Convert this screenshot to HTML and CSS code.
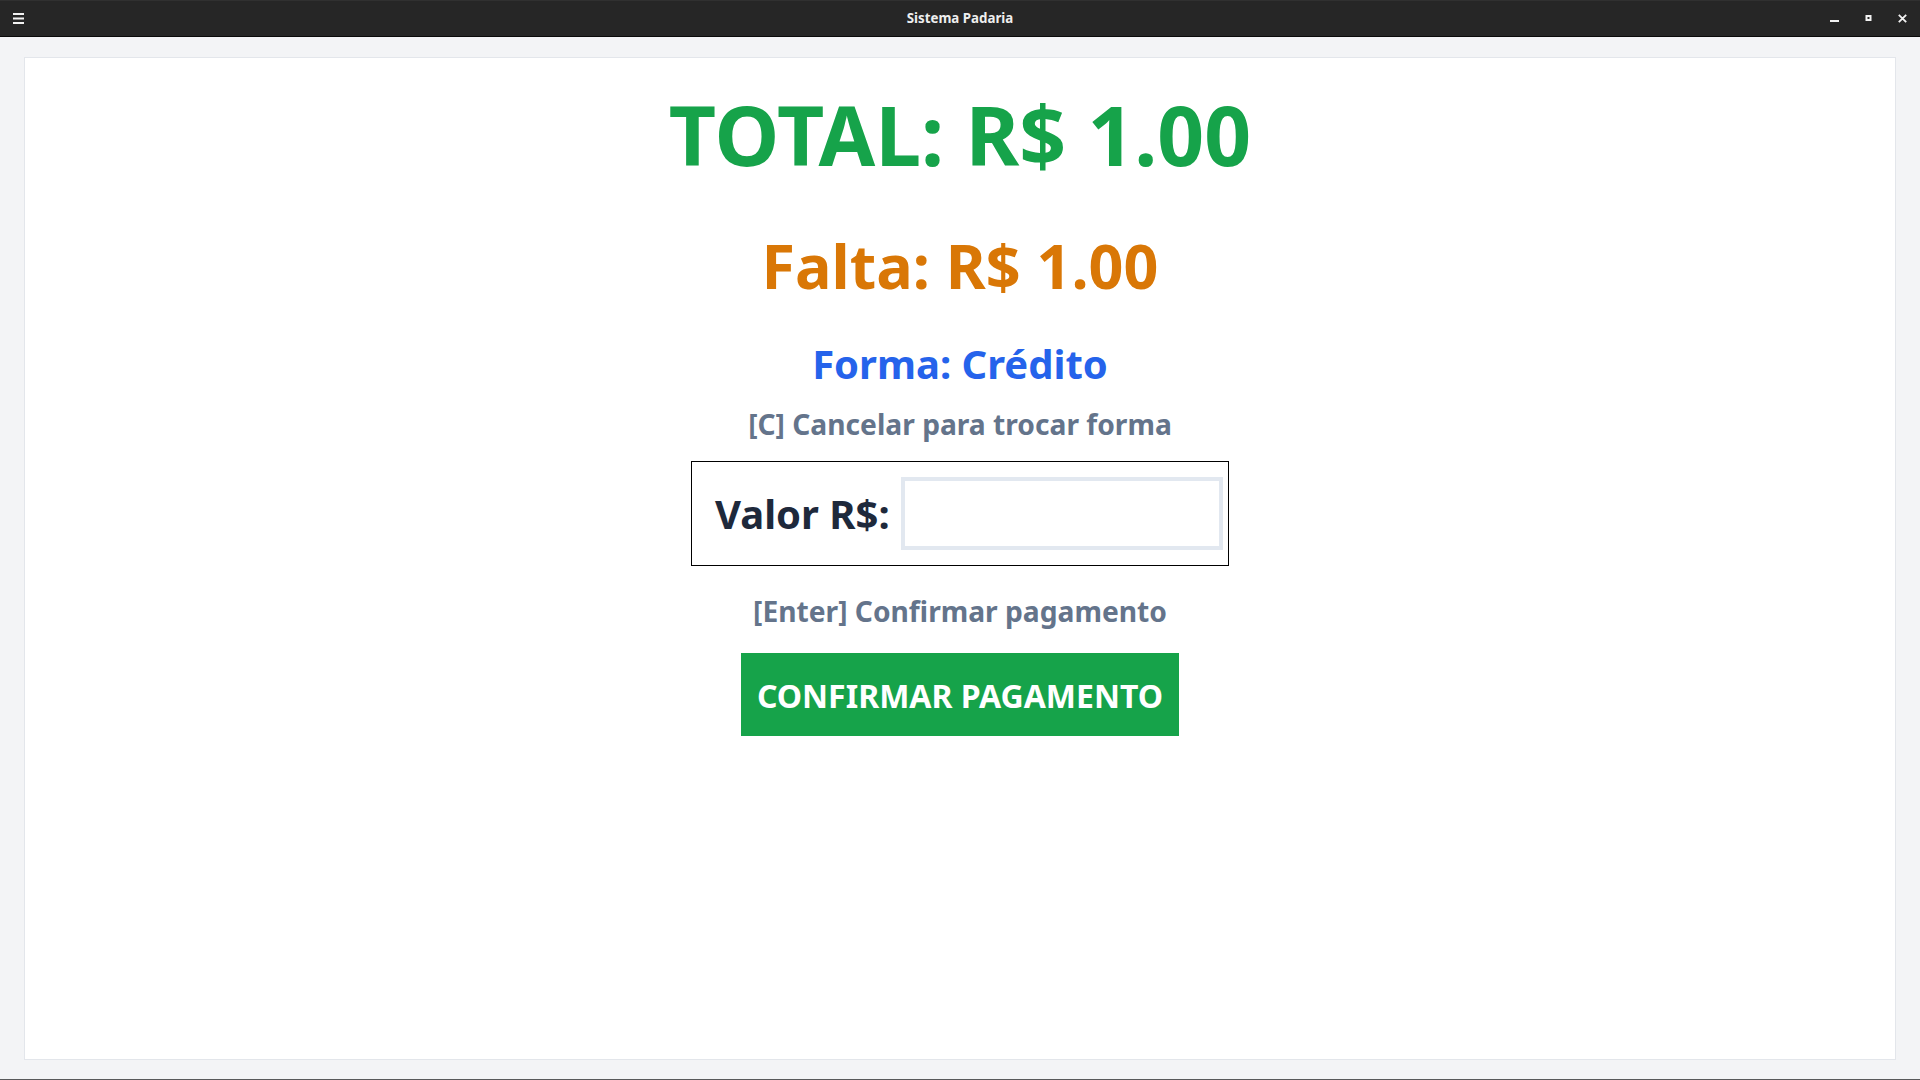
FILE: index.html
```html
<!DOCTYPE html>
<html lang="pt-BR">
<head>
<meta charset="utf-8">
<title>Sistema Padaria</title>
<link rel="stylesheet" href="styles.css">
</head>
<body>
<div class="window">
  <header class="titlebar">
    <div class="tb-left">
      <svg class="menu-icon" width="11" height="11" viewBox="0 0 11 11"><rect x="0" y="0" width="11" height="2" fill="#f2f2f2"/><rect x="0" y="4.5" width="11" height="2" fill="#f2f2f2"/><rect x="0" y="9" width="11" height="2" fill="#f2f2f2"/></svg>
    </div>
    <div class="tb-title">Sistema Padaria</div>
    <div class="tb-right">
      <svg class="wbtn" width="9" height="9" viewBox="0 0 9 9"><rect x="0" y="6" width="9" height="2" fill="#f2f2f2"/></svg>
      <svg class="wbtn" width="9" height="9" viewBox="0 0 9 9"><rect x="1.5" y="1" width="6" height="6" fill="#f2f2f2"/><rect x="3.5" y="3" width="2" height="2" fill="#262626"/></svg>
      <svg class="wbtn" width="9" height="9" viewBox="0 0 9 9"><path d="M0.8 0.8 L8.2 8.2 M8.2 0.8 L0.8 8.2" stroke="#f2f2f2" stroke-width="1.8" fill="none"/></svg>
    </div>
  </header>
  <main class="content">
    <section class="card">
      <div class="total">TOTAL: R$ 1.00</div>
      <div class="falta">Falta: R$ 1.00</div>
      <div class="forma">Forma: Crédito</div>
      <div class="hint hint-c">[C] Cancelar para trocar forma</div>
      <div class="valor-box">
        <label class="valor-label" for="valor">Valor R$:</label>
        <input class="valor-input" id="valor" type="text">
      </div>
      <div class="hint hint-enter">[Enter] Confirmar pagamento</div>
      <button class="confirm-btn">CONFIRMAR PAGAMENTO</button>
    </section>
  </main>
</div>
</body>
</html>
```

FILE: styles.css
```css
* { box-sizing: border-box; }
html, body { margin: 0; padding: 0; }
body {
  width: 1920px;
  height: 1080px;
  overflow: hidden;
  font-family: "Noto Sans", "Open Sans", sans-serif;
  background: #f3f4f6;
}
.window {
  height: 1080px;
  display: flex;
  flex-direction: column;
  border-bottom: 1px solid #58595b;
}
.titlebar {
  height: 37px;
  flex: 0 0 37px;
  background: #262626;
  border-top: 1px solid #303030;
  border-bottom: 1px solid #0a0a0a;
  display: flex;
  align-items: center;
  position: relative;
}
.tb-left {
  padding-left: 13px;
  display: flex;
  align-items: center;
  height: 100%;
}
.menu-icon { display: block; margin-top: -1px; }
.tb-title {
  position: absolute;
  left: 0;
  right: 0;
  top: 0;
  bottom: 0;
  display: flex;
  align-items: center;
  justify-content: center;
  color: #eeeeee;
  font-weight: 700;
  font-size: 13.3px;
  padding-bottom: 2px;
  pointer-events: none;
}
.tb-right {
  margin-left: auto;
  display: flex;
  align-items: center;
  gap: 25px;
  padding-right: 13px;
  height: 100%;
}
.wbtn { display: block; margin-top: -1px; }
.content {
  flex: 1;
  padding: 20px 24px 19px;
  display: flex;
}
.card {
  flex: 1;
  background: #ffffff;
  border: 1px solid #e3e6eb;
  display: flex;
  flex-direction: column;
  align-items: center;
  padding-top: 35px;
}
.total, .falta, .forma, .hint { line-height: 1; font-weight: 700; }
.total {
  font-size: 82px;
  color: #16a34a;
}
.falta {
  font-size: 61px;
  color: #d97706;
  margin-top: 60px;
}
.forma {
  font-size: 40px;
  color: #2563eb;
  margin-top: 48px;
}
.hint {
  font-size: 28.2px;
  color: #64748b;
}
.hint-c { margin-top: 26px; }
.valor-box {
  margin-top: 23px;
  width: 538px;
  height: 105px;
  border: 1px solid #000000;
  display: flex;
  align-items: center;
  padding: 0 5px 0 23px;
}
.valor-label {
  font-size: 40px;
  font-weight: 700;
  line-height: 1;
  color: #1e293b;
}
.valor-input {
  margin-left: auto;
  width: 322px;
  height: 73px;
  border: 4px solid #e2e8f0;
  background: #ffffff;
  outline: none;
  font-family: inherit;
  font-size: 30px;
  padding: 0 10px;
}
.hint-enter { margin-top: 31px; }
.confirm-btn {
  margin-top: 28px;
  width: 438px;
  height: 83px;
  border: none;
  background: #16a34a;
  color: #ffffff;
  font-family: inherit;
  font-weight: 700;
  font-size: 32px;
  line-height: 1;
  padding: 2px 0 0;
  cursor: pointer;
}
```
